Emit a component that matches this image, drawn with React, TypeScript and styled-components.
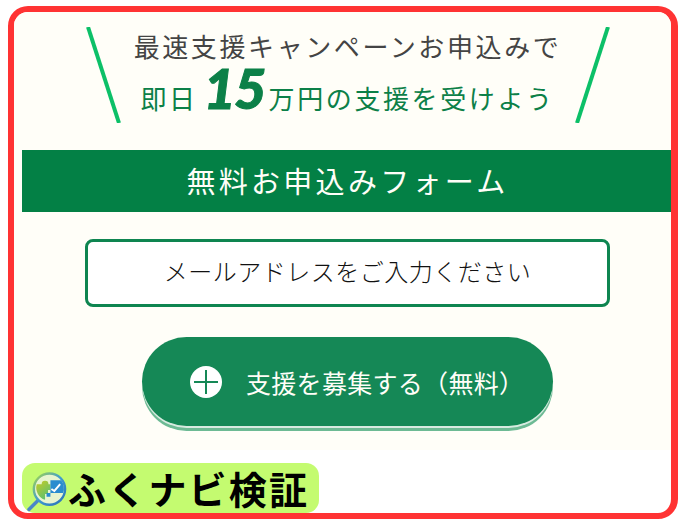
import React from 'react'
import styled, { createGlobalStyle } from 'styled-components'

const GlobalStyle = createGlobalStyle`
  html, body {
    margin: 0;
    padding: 0;
    background: #ffffff;
  }
`

const jp = `"Noto Sans CJK JP", "Noto Sans", sans-serif`

const Frame = styled.main`
  box-sizing: border-box;
  width: 670px;
  height: 513px;
  margin: 6px 0 0 8px;
  border: 6px solid #ff3333;
  border-right-width: 7px;
  border-radius: 20px;
  background: #ffffff;
  overflow: hidden;
  font-family: ${jp};
`

const Panel = styled.section`
  box-sizing: border-box;
  height: 438px;
  padding: 15px 0 0 10px;
  background: #fffef8;
  display: flex;
  flex-direction: column;
  align-items: center;
`

const Lead = styled.header`
  display: flex;
  justify-content: center;
  align-items: stretch;
  gap: 14px;
  height: 96px;
`

const Slash = styled.svg`
  width: 35px;
  height: 96px;
  flex: none;
`

const LeadText = styled.div`
  width: 426px;
  display: flex;
  flex-direction: column;
  align-items: center;
`

const LeadTop = styled.p`
  margin: 0;
  height: 38px;
  font-size: 26px;
  line-height: 38px;
  font-weight: 400;
  letter-spacing: 2.6px;
  color: #444444;
  white-space: nowrap;
`

const LeadBottom = styled.p`
  box-sizing: border-box;
  margin: 0;
  padding-top: 1px;
  display: flex;
  align-items: baseline;
  height: 52px;
  font-size: 26px;
  line-height: 50px;
  font-weight: 400;
  letter-spacing: 2.6px;
  color: #0c8048;
  white-space: nowrap;
`

const Amount = styled.span`
  margin: 0 4px 0 6px;
  font-family: Lato, sans-serif;
  font-size: 56px;
  font-weight: 900;
  font-style: italic;
  letter-spacing: -2px;
  line-height: 44px;
  -webkit-text-stroke: 1px #0c8048;
`

const FormTitle = styled.h2`
  align-self: stretch;
  margin: 27px 0 0 -2px;
  height: 62px;
  padding-left: 2px;
  background: #038045;
  color: #fffef8;
  font-size: 29px;
  font-weight: 400;
  line-height: 61px;
  letter-spacing: 3.3px;
  text-align: center;
`

const EmailBox = styled.div`
  box-sizing: border-box;
  width: 525px;
  height: 68px;
  margin-top: 27px;
  border: 3px solid #0e8550;
  border-radius: 8px;
  background: #ffffff;
  color: #111111;
  font-family: "Liberation Serif", "Noto Sans CJK JP", serif;
  font-size: 24px;
  font-weight: 300;
  letter-spacing: 0.5px;
  line-height: 62px;
  text-align: center;
`

const SubmitButton = styled.button`
  box-sizing: border-box;
  width: 411px;
  height: 89px;
  margin-top: 30px;
  padding: 0 0 0 48px;
  border: none;
  border-radius: 45px;
  background: #158856;
  box-shadow: 0 2px 0 #d7ebe0, 0 5px 0 #6dba94;
  color: #fffef8;
  font-family: ${jp};
  font-size: 25px;
  font-weight: 400;
  letter-spacing: 0.3px;
  display: flex;
  align-items: center;
  gap: 24px;
`

const PlusIcon = styled.svg`
  width: 32px;
  height: 32px;
  flex: none;
`

const Badge = styled.footer`
  box-sizing: border-box;
  width: 297px;
  height: 50px;
  margin: 13px 0 0 8px;
  padding-left: 5px;
  border-radius: 13px;
  background: #c4fb70;
  display: flex;
  align-items: center;
  color: #000000;
  font-size: 38px;
  font-weight: 700;
  letter-spacing: 2.2px;
  line-height: 50px;
  white-space: nowrap;
`

const BadgeIcon = styled.svg`
  width: 41px;
  height: 44px;
  flex: none;
  margin-top: 6px;
`

export default function App() {
  return (
    <>
      <GlobalStyle />
      <Frame>
        <Panel>
          <Lead>
            <Slash viewBox="0 0 35 96">
              <line x1="2" y1="0" x2="33" y2="96" stroke="#0cc068" strokeWidth="4" />
            </Slash>
            <LeadText>
              <LeadTop>最速支援キャンペーンお申込みで</LeadTop>
              <LeadBottom>
                即日<Amount>15</Amount>万円の支援を受けよう
              </LeadBottom>
            </LeadText>
            <Slash viewBox="0 0 35 96">
              <line x1="33" y1="0" x2="2" y2="96" stroke="#0cc068" strokeWidth="4" />
            </Slash>
          </Lead>
          <FormTitle>無料お申込みフォーム</FormTitle>
          <EmailBox>メールアドレスをご入力ください</EmailBox>
          <SubmitButton type="button">
            <PlusIcon viewBox="0 0 32 32">
              <circle cx="16" cy="16" r="16" fill="#ffffff" />
              <path d="M16 4v24M4 16h24" stroke="#158856" strokeWidth="2" />
            </PlusIcon>
            支援を募集する（無料）
          </SubmitButton>
        </Panel>
        <Badge>
          <BadgeIcon viewBox="0 0 42 44">
            <defs>
              <linearGradient id="ring" x1="0" y1="0" x2="1" y2="1">
                <stop offset="0" stopColor="#a6d64a" />
                <stop offset="0.5" stopColor="#3f9bd0" />
                <stop offset="1" stopColor="#2a6fb8" />
              </linearGradient>
              <linearGradient id="piece" x1="0" y1="0" x2="0.6" y2="1">
                <stop offset="0" stopColor="#c8cc22" />
                <stop offset="1" stopColor="#5cc070" />
              </linearGradient>
            </defs>
            <line x1="12" y1="31" x2="2" y2="41" stroke="#4a86c8" strokeWidth="3.5" strokeLinecap="round" />
            <circle cx="23" cy="20" r="16" fill="#e8f5d0" stroke="url(#ring)" strokeWidth="2.5" />
            <path d="M10 15h5a3.500 3.500 0 1 1 7 0h2v6h-2.500v4h-3v6a13 13 0 0 1-8.500-16z" fill="url(#piece)" />
            <path d="M24 11h11a14 14 0 0 1 2 13h-13v4h-4v-4h4z" fill="#2a8ccf" />
            <path d="M25 20l3 2 6-7" fill="none" stroke="#ffffff" strokeWidth="2" />
          </BadgeIcon>
          ふくナビ検証
        </Badge>
      </Frame>
    </>
  )
}
